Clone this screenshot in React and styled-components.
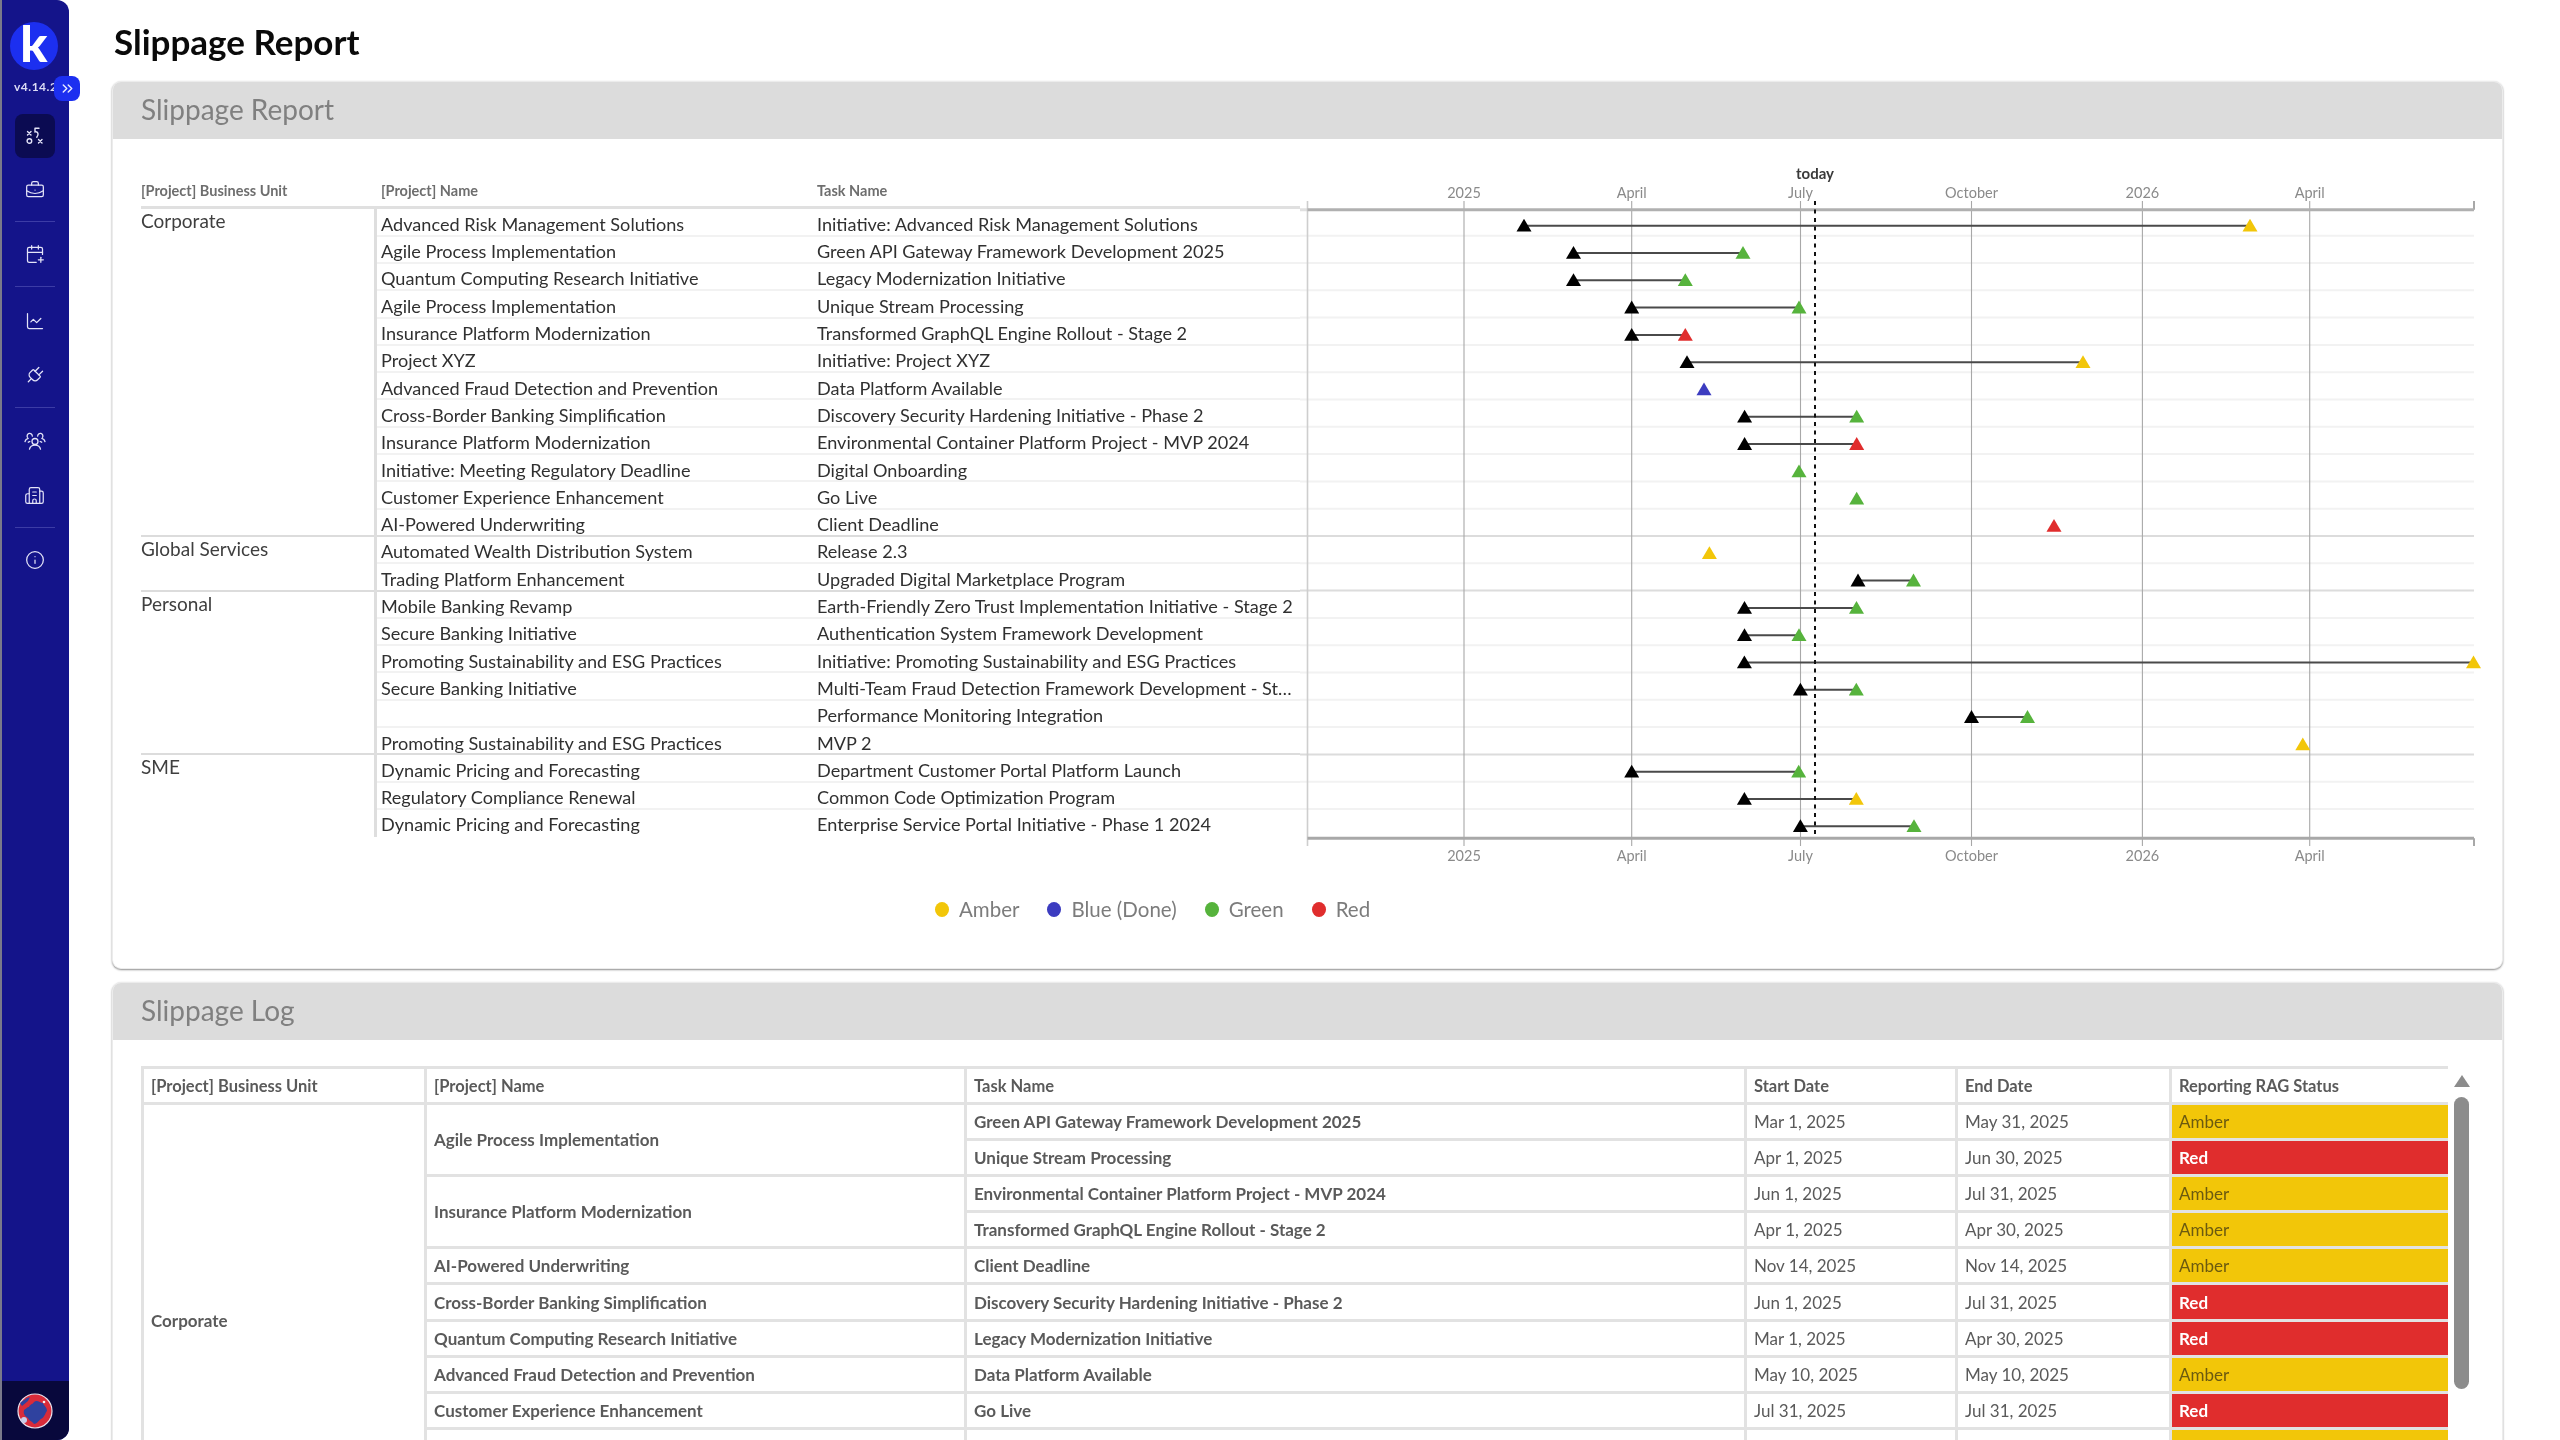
import React from "react";
import styled, { createGlobalStyle } from "styled-components";
import { BriefcaseBusiness, CalendarPlus, ChartLine, Plug, Building2, Info, ChevronsRight } from "lucide-react";

const Global = createGlobalStyle`
  html, body { margin: 0; padding: 0; background: #fff; overflow: hidden; }
  * { box-sizing: border-box; }
  body { font-family: Lato, "Noto Sans", sans-serif; }
`;

const Page = styled.div`display: flex; width: 2560px; height: 1440px; overflow: hidden; background: #fff; filter: blur(0.5px);`;

const Sidebar = styled.aside`
  position: relative; flex: none; width: 69px; height: 1440px; display: flex; flex-direction: column; align-items: stretch;
  background: #14148a; border-left: 2px solid #7a7a8a; border-radius: 0 12px 12px 0; padding-top: 22px; color: #fff;
`;
const LogoWrap = styled.div`
  width: 48px; height: 48px; margin-left: 8px; border-radius: 50%; background: #1c2ff0; display: flex; align-items: center; justify-content: center;
  color: #fff; font-size: 50px; font-weight: 900; line-height: 1; padding-bottom: 7px;
`;
const Version = styled.div`margin: 9px 0 0 12px; font-size: 12px; font-weight: 700; letter-spacing: 0.5px; color: #dcdcf5; height: 16px; line-height: 16px; white-space: nowrap;`;
const Expand = styled.button`
  position: absolute; left: 52px; top: 76px; width: 26px; height: 25px; border: 0; padding: 0; border-radius: 8px; background: #1c2ff0; color: #e8eaff;
  display: flex; align-items: center; justify-content: center;
`;
const NavItem = styled.div`
  height: 54px; display: flex; align-items: center; justify-content: center; color: #e4e4f8; padding-right: 2px; margin-top: ${p => p.$mt || 0}px;
`;
const ActiveBox = styled.div`width: 40px; height: 44px; border-radius: 8px; background: #0b0b52; display: flex; align-items: center; justify-content: center;`;
const NavDivider = styled.div`height: 1px; margin: ${p => p.$top}px 14px ${p => p.$bottom}px 13px; background: #3c3ca6;`;
const Foot = styled.div`margin-top: auto; height: 59px; background: #08083c; border-radius: 0 0 12px 0; display: flex; align-items: center; justify-content: center; padding-right: 2px;`;
const DiagonalPlug = styled(Plug)`transform: rotate(45deg);`;

const Main = styled.main`flex: 1; min-width: 0; height: 1440px; display: flex; flex-direction: column; padding: 0 57px 0 43px;`;
const Title = styled.h1`margin: 0; height: 81px; padding: 21px 0 0 2px; font-size: 35px; line-height: 40px; font-weight: 700; color: #0a0a0a; flex: none;`;

const Panel = styled.section`
  background: #fff; border: 1px solid #ececec; border-radius: 9px; box-shadow: 0 1px 2px rgba(0,0,0,.45); overflow: hidden; flex: none;
  height: ${p => p.$h}px; margin-bottom: 13px; display: flex; flex-direction: column;
`;
const PanelHead = styled.header`flex: none; height: 57px; background: #dcdcdc; padding: 0 0 3px 28px; display: flex; align-items: center; font-size: 28px; color: #808080;`;

const ChartBody = styled.div`display: flex; height: 722px; margin-top: 22px; padding-left: 28px;`;
const LeftCol = styled.div`flex: none; width: 1159px; display: flex; flex-direction: column;`;
const HeadRow = styled.div`
  height: 48.4px; display: flex; align-items: flex-end; padding-bottom: 7px; border-bottom: 3px solid #e0e0e0;
  font-size: 14.5px; font-weight: 700; color: #6e6e6e;
`;
const HeadBu = styled.div`width: 240px;`;
const HeadProject = styled.div`width: 436px;`;
const Group = styled.div`display: flex; box-shadow: ${p => p.$last ? "none" : "inset 0 -2px 0 #dcdcdc"};`;
const BuCell = styled.div`flex: none; width: 233px; font-size: 19px; color: #3f3f3f; line-height: 24px;`;
const Rows = styled.div`flex: 1; border-left: 3px solid #dedede; min-width: 0;`;
const Row = styled.div`
  height: 27.3px; display: flex; align-items: flex-start; padding: 3.5px 0 0 4px; line-height: 22px; font-size: 18.1px; color: #303030;
  border-bottom: ${p => p.$plain ? "none" : "2px solid #f2f2f2"};
`;
const ProjectCell = styled.div`flex: none; width: 436px; height: 22px; white-space: nowrap;`;
const TaskCell = styled.div`flex: none; width: 479px; height: 23px; white-space: nowrap; overflow: hidden; text-overflow: ellipsis;`;
const GanttSvg = styled.svg`flex: none; display: block;`;
const Legend = styled.div`display: flex; align-items: center; gap: 28px; margin: 11px 0 0 ${934 - 112}px; height: 30px;`;
const LegendItem = styled.div`display: flex; align-items: center; gap: 10px; font-size: 20.5px; color: #7c7c7c;`;
const Dot = styled.span`width: 14px; height: 15px; border-radius: 50%; background: ${p => p.$c}; display: block;`;

const LogBody = styled.div`flex: 1; min-height: 0; display: flex; padding: 26px 0 0 28px;`;
const TableWrap = styled.div`flex: none; width: 2307px; height: 400px; overflow: hidden;`;
const Table = styled.table`
  border-collapse: collapse; table-layout: fixed; width: 2307px; font-size: 17px; color: #5a5a5a;
`;
const Th = styled.th`border: 3px solid #e2e2e2; height: 36px; text-align: left; padding: 0 7px; font-weight: 700; font-size: 16.5px; color: #5a5a5a;`;
const Td = styled.td`
  border: 3px solid #e2e2e2; height: 36.1px; padding: 0 7px; white-space: nowrap; overflow: hidden; text-overflow: ellipsis;
  font-weight: ${p => p.$bold ? 700 : 400}; background: ${p => p.$bg || "#fff"}; color: ${p => p.$fg || "#5a5a5a"};
`;
const Scroll = styled.div`flex: none; width: 38px; padding: 9px 0 0 6px; display: flex; flex-direction: column; gap: 10px;`;
const ScrollArrow = styled.div`width: 0; height: 0; border-left: 8px solid transparent; border-right: 8px solid transparent; border-bottom: 12px solid #8c8c8c;`;
const ScrollThumb = styled.div`width: 15px; height: 292px; border-radius: 8px; background: #8c8c8c;`;

const A = "#f2c609", G = "#56b33c", R = "#e02d2d", B = "#3c3cc0";
const rowsData = [
  { bu: "Corporate", rows: [
    ["Advanced Risk Management Solutions", "Initiative: Advanced Risk Management Solutions", 1524, 2250, A],
    ["Agile Process Implementation", "Green API Gateway Framework Development 2025", 1573.5, 1743, G],
    ["Quantum Computing Research Initiative", "Legacy Modernization Initiative", 1573.5, 1685.3, G],
    ["Agile Process Implementation", "Unique Stream Processing", 1631.7, 1799, G],
    ["Insurance Platform Modernization", "Transformed GraphQL Engine Rollout - Stage 2", 1631.7, 1685.3, R],
    ["Project XYZ", "Initiative: Project XYZ", 1687, 2083, A],
    ["Advanced Fraud Detection and Prevention", "Data Platform Available", null, 1704, B],
    ["Cross-Border Banking Simplification", "Discovery Security Hardening Initiative - Phase 2", 1744.6, 1856.7, G],
    ["Insurance Platform Modernization", "Environmental Container Platform Project - MVP 2024", 1744.6, 1856.7, R],
    ["Initiative: Meeting Regulatory Deadline", "Digital Onboarding", null, 1799, G],
    ["Customer Experience Enhancement", "Go Live", null, 1856.7, G],
    ["AI-Powered Underwriting", "Client Deadline", null, 2054, R],
  ]},
  { bu: "Global Services", rows: [
    ["Automated Wealth Distribution System", "Release 2.3", null, 1709.4, A],
    ["Trading Platform Enhancement", "Upgraded Digital Marketplace Program", 1858, 1913.5, G],
  ]},
  { bu: "Personal", rows: [
    ["Mobile Banking Revamp", "Earth-Friendly Zero Trust Implementation Initiative - Stage 2", 1744.5, 1856.5, G],
    ["Secure Banking Initiative", "Authentication System Framework Development", 1744.5, 1799, G],
    ["Promoting Sustainability and ESG Practices", "Initiative: Promoting Sustainability and ESG Practices", 1744.4, 2473.5, A],
    ["Secure Banking Initiative", "Multi-Team Fraud Detection Framework Development - Stage 2", 1800.4, 1856.3, G],
    ["", "Performance Monitoring Integration", 1971.5, 2027.5, G],
    ["Promoting Sustainability and ESG Practices", "MVP 2", null, 2302.8, A],
  ]},
  { bu: "SME", rows: [
    ["Dynamic Pricing and Forecasting", "Department Customer Portal Platform Launch", 1631.7, 1798.7, G],
    ["Regulatory Compliance Renewal", "Common Code Optimization Program", 1744.4, 1856.3, A],
    ["Dynamic Pricing and Forecasting", "Enterprise Service Portal Initiative - Phase 1 2024", 1800.4, 1914, G],
  ]},
];

const OX = 1300;
const ROW = 27.3, TOP = 48.4;
const ticks = [[1464, "2025"], [1631.7, "April"], [1800.5, "July"], [1971.5, "October"], [2142.4, "2026"], [2309.7, "April"]];

const Tri = ({ x, y, c }) => <polygon points={`${x},${y - 7} ${x + 7.5},${y + 5.8} ${x - 7.5},${y + 5.8}`} fill={c} />;

function Gantt() {
  const flat = rowsData.flatMap((g, gi) => g.rows.map((r, i) => ({ r, sep: i === g.rows.length - 1 && gi < rowsData.length - 1 })));
  const axTop = 48.7, axBot = 677.3, L = 1307.5 - OX, Rt = 2474 - OX;
  return (
    <GanttSvg width="1190" height="722" viewBox="0 0 1190 722">
      <line x1="0" x2={L} y1={axTop} y2={axTop} stroke="#e0e0e0" strokeWidth="3" />
      {flat.map((f, i) => {
        const y = TOP + (i + 1) * ROW - 1;
        if (i === flat.length - 1) return null;
        return <line key={i} x1="0" x2={Rt} y1={y} y2={y} stroke={f.sep ? "#dcdcdc" : "#f2f2f2"} strokeWidth="2" />;
      })}
      <line x1={L} x2={L} y1="40" y2="685" stroke="#cecece" strokeWidth="1.6" />
      <line x1={Rt} x2={Rt} y1="40" y2={axTop} stroke="#a8a8a8" strokeWidth="2" />
      <line x1={Rt} x2={Rt} y1={axBot} y2="685" stroke="#a8a8a8" strokeWidth="2" />
      {ticks.map(([x, t], i) => (
        <g key={i}>
          <line x1={x - OX} x2={x - OX} y1="40" y2="685" stroke="#a8a8a8" strokeWidth="1.1" />
          <text x={x - OX} y="37" textAnchor="middle" fontSize="14.5" fill="#8a8a8a" fontFamily="Lato, sans-serif">{t}</text>
          <text x={x - OX} y="700" textAnchor="middle" fontSize="14.5" fill="#8a8a8a" fontFamily="Lato, sans-serif">{t}</text>
        </g>
      ))}
      <line x1={L} x2={Rt} y1={axTop} y2={axTop} stroke="#b0b0b0" strokeWidth="3" />
      <line x1={L} x2={Rt} y1={axBot} y2={axBot} stroke="#a8a8a8" strokeWidth="3" />
      <text x={1815 - OX} y="18" textAnchor="middle" fontSize="15" fontWeight="700" fill="#3a3a3a" fontFamily="Lato, sans-serif">today</text>
      {flat.map((f, i) => {
        const y = TOP + i * ROW + 16.3;
        const [, , s, e] = f.r;
        return s != null ? <line key={i} x1={s - OX} x2={e - OX} y1={y} y2={y} stroke="#4a4a4a" strokeWidth="2" /> : null;
      })}
      <line x1={1815 - OX} x2={1815 - OX} y1="40" y2="677" stroke="#111" strokeWidth="2" strokeDasharray="4 4.5" />
      {flat.map((f, i) => {
        const y = TOP + i * ROW + 16.3;
        const [, , s, e, c] = f.r;
        return (
          <g key={i}>
            {s != null && <Tri x={s - OX} y={y} c="#000" />}
            <Tri x={e - OX} y={y} c={c} />
          </g>
        );
      })}
    </GanttSvg>
  );
}

const log = [
  ["Agile Process Implementation", 2, "Green API Gateway Framework Development 2025", "Mar 1, 2025", "May 31, 2025", "Amber"],
  [null, 0, "Unique Stream Processing", "Apr 1, 2025", "Jun 30, 2025", "Red"],
  ["Insurance Platform Modernization", 2, "Environmental Container Platform Project - MVP 2024", "Jun 1, 2025", "Jul 31, 2025", "Amber"],
  [null, 0, "Transformed GraphQL Engine Rollout - Stage 2", "Apr 1, 2025", "Apr 30, 2025", "Amber"],
  ["AI-Powered Underwriting", 1, "Client Deadline", "Nov 14, 2025", "Nov 14, 2025", "Amber"],
  ["Cross-Border Banking Simplification", 1, "Discovery Security Hardening Initiative - Phase 2", "Jun 1, 2025", "Jul 31, 2025", "Red"],
  ["Quantum Computing Research Initiative", 1, "Legacy Modernization Initiative", "Mar 1, 2025", "Apr 30, 2025", "Red"],
  ["Advanced Fraud Detection and Prevention", 1, "Data Platform Available", "May 10, 2025", "May 10, 2025", "Amber"],
  ["Customer Experience Enhancement", 1, "Go Live", "Jul 31, 2025", "Jul 31, 2025", "Red"],
  ["Initiative: Meeting Regulatory Deadline", 1, "Digital Onboarding", "Jul 1, 2025", "Jul 1, 2025", "Amber"],
  ["Project XYZ", 1, "Initiative: Project XYZ", "Jun 1, 2025", "Dec 1, 2025", "Amber"],
  ["Advanced Risk Management Solutions", 1, "Initiative: Advanced Risk Management Solutions", "Feb 1, 2025", "Feb 1, 2026", "Amber"],
];

const TacticsIcon = () => (
  <svg width="18" height="18" viewBox="0 0 18 18" fill="none" stroke="currentColor" strokeWidth="1.4" strokeLinecap="round">
    <path d="M1.500 4.500l3.500 3.500M5 4.500L1.500 8" />
    <circle cx="3.400" cy="14" r="2.300" />
    <path d="M12.500 12.500l3.500 3.500M16 12.500l-3.500 3.500" />
    <path d="M9 1.200h4M9 1.200v3.600c3-.6 4.200 2.600 1.800 5.400" />
  </svg>
);
const PeopleIcon = () => (
  <svg width="22" height="18" viewBox="0 0 22 18" fill="none" stroke="currentColor" strokeWidth="1.3" strokeLinecap="round">
    <circle cx="11" cy="9.500" r="3" />
    <path d="M5.500 17.200c.6-2.600 2.600-4 5.500-4s4.900 1.400 5.500 4" />
    <path d="M3.500 5.300a2.600 2.600 0 1 1 4.800-1.200" />
    <path d="M13.700 4.100a2.600 2.600 0 1 1 4.800 1.200" />
    <path d="M1 9.500c.4-1.800 1.600-2.900 3.200-3.200M21 9.500c-.4-1.800-1.600-2.900-3.200-3.200" />
    <path d="M5.800 9.500 4.300 10.200M16.200 9.500l1.500.7" />
  </svg>
);
const Avatar = () => (
  <svg width="36" height="36" viewBox="0 0 36 36">
    <circle cx="18" cy="18" r="17" fill="#d92b3a" stroke="#e8e2ee" strokeWidth="1.2" />
    <path d="M17 9c3-3 6 1 9 1 1 3 4 4 4 8-2 2-2 6-6 8-3 2-4 5-7 5-2-3-5-3-6-6-3-2-5-4-4-8 2-1 3-3 5-3 1-3 3-2 5-5z" fill="#2f429f" />
    <path d="M3 10c3-2 6-5 10-6l-2 4-6 5z" fill="#2f429f" />
    <circle cx="7" cy="27" r="3" fill="#c9cde8" />
    <circle cx="27" cy="9" r="1.300" fill="#f3eef3" />
  </svg>
);

export default function App() {
  return (
    <Page>
      <Global />
      <Sidebar>
        <LogoWrap>k</LogoWrap>
        <Version>v4.14.2</Version>
        <Expand aria-label="Expand"><ChevronsRight size={17} strokeWidth={2} /></Expand>
        <NavItem $mt={14}><ActiveBox><TacticsIcon /></ActiveBox></NavItem>
        <NavItem><BriefcaseBusiness size={20} strokeWidth={1.5} /></NavItem>
        <NavDivider $top={4} $bottom={5} />
        <NavItem><CalendarPlus size={20} strokeWidth={1.5} /></NavItem>
        <NavDivider $top={5} $bottom={7} />
        <NavItem><ChartLine size={20} strokeWidth={1.5} /></NavItem>
        <NavItem><DiagonalPlug size={21} strokeWidth={1.5} /></NavItem>
        <NavDivider $top={5} $bottom={6} />
        <NavItem><PeopleIcon /></NavItem>
        <NavItem><Building2 size={21} strokeWidth={1.4} /></NavItem>
        <NavDivider $top={5} $bottom={5} />
        <NavItem><Info size={20} strokeWidth={1.5} /></NavItem>
        <Foot><Avatar /></Foot>
      </Sidebar>
      <Main>
        <Title>Slippage Report</Title>
        <Panel $h={888}>
          <PanelHead>Slippage Report</PanelHead>
          <ChartBody>
            <LeftCol>
              <HeadRow>
                <HeadBu>[Project] Business Unit</HeadBu>
                <HeadProject>[Project] Name</HeadProject>
                <div>Task Name</div>
              </HeadRow>
              {rowsData.map((g, gi) => (
                <Group key={g.bu} $last={gi === rowsData.length - 1}>
                  <BuCell>{g.bu}</BuCell>
                  <Rows>
                    {g.rows.map((r, i) => (
                      <Row key={i} $plain={i === g.rows.length - 1}>
                        <ProjectCell>{r[0]}</ProjectCell>
                        <TaskCell>{r[1]}</TaskCell>
                      </Row>
                    ))}
                  </Rows>
                </Group>
              ))}
            </LeftCol>
            <Gantt />
          </ChartBody>
          <Legend>
            <LegendItem><Dot $c={A} />Amber</LegendItem>
            <LegendItem><Dot $c={B} />Blue (Done)</LegendItem>
            <LegendItem><Dot $c={G} />Green</LegendItem>
            <LegendItem><Dot $c={R} />Red</LegendItem>
          </Legend>
        </Panel>
        <Panel $h={520}>
          <PanelHead>Slippage Log</PanelHead>
          <LogBody>
            <TableWrap>
              <Table>
                <colgroup>
                  <col width="283" /><col width="540" /><col width="780" /><col width="211" /><col width="214" /><col width="279" />
                </colgroup>
                <thead>
                  <tr>
                    <Th>[Project] Business Unit</Th><Th>[Project] Name</Th><Th>Task Name</Th><Th>Start Date</Th><Th>End Date</Th><Th>Reporting RAG Status</Th>
                  </tr>
                </thead>
                <tbody>
                  {log.map((r, i) => (
                    <tr key={i}>
                      {i === 0 && <Td $bold rowSpan={12}>Corporate</Td>}
                      {r[0] && <Td $bold rowSpan={r[1]}>{r[0]}</Td>}
                      <Td $bold>{r[2]}</Td>
                      <Td>{r[3]}</Td>
                      <Td>{r[4]}</Td>
                      <Td $bg={r[5] === "Red" ? R : A} $fg={r[5] === "Red" ? "#fff" : "#6b5a10"} $bold={r[5] === "Red"}>{r[5]}</Td>
                    </tr>
                  ))}
                </tbody>
              </Table>
            </TableWrap>
            <Scroll>
              <ScrollArrow />
              <ScrollThumb />
            </Scroll>
          </LogBody>
        </Panel>
      </Main>
    </Page>
  );
}
